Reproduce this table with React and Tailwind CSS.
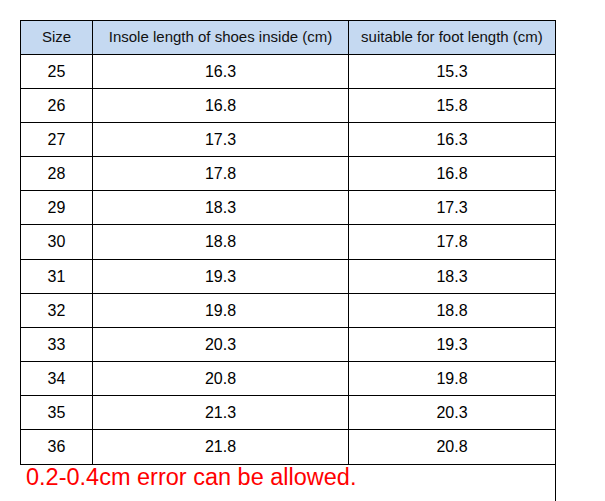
import React from "react";

const rows = [
  ["25", "16.3", "15.3"],
  ["26", "16.8", "15.8"],
  ["27", "17.3", "16.3"],
  ["28", "17.8", "16.8"],
  ["29", "18.3", "17.3"],
  ["30", "18.8", "17.8"],
  ["31", "19.3", "18.3"],
  ["32", "19.8", "18.8"],
  ["33", "20.3", "19.3"],
  ["34", "20.8", "19.8"],
  ["35", "21.3", "20.3"],
  ["36", "21.8", "20.8"],
];

const App = () => {
  return (
    <div className="bg-white w-[605px] h-[501px] overflow-hidden pt-[20px] pl-[20px] font-['Liberation_Sans',Arial,sans-serif] text-black">
      {/* size table */}
      <div className="w-[536px] border-l border-t border-black">
        <div className="grid grid-cols-[72px_256px_207px] h-[34px] bg-[#c5d9f1] text-[15px] text-[#111]">
          <div className="flex items-center justify-center border-r border-b border-black">Size</div>
          <div className="flex items-center justify-center border-r border-b border-black">Insole length of shoes inside (cm)</div>
          <div className="flex items-center justify-center border-r border-b border-black">suitable for foot length (cm)</div>
        </div>
        {rows.map((r, i) => (
          <div
            key={r[0]}
            className={
              "grid grid-cols-[72px_256px_207px] text-[16px] " +
              (i === 5 || i === 11 ? "h-[35px]" : "h-[34px]")
            }
          >
            <div className="flex items-center justify-center border-r border-b border-black">{r[0]}</div>
            <div className="flex items-center justify-center border-r border-b border-black">{r[1]}</div>
            <div className="flex items-center justify-center border-r border-b border-black">{r[2]}</div>
          </div>
        ))}
      </div>
      {/* note row, only right edge is ruled */}
      <div className="w-[536px] h-[40px] border-r border-black pl-[6px] pt-[1px]">
        <p className="text-[23.5px] leading-none text-[#f00]">0.2-0.4cm error can be allowed.</p>
      </div>
    </div>
  );
};

export default App;
